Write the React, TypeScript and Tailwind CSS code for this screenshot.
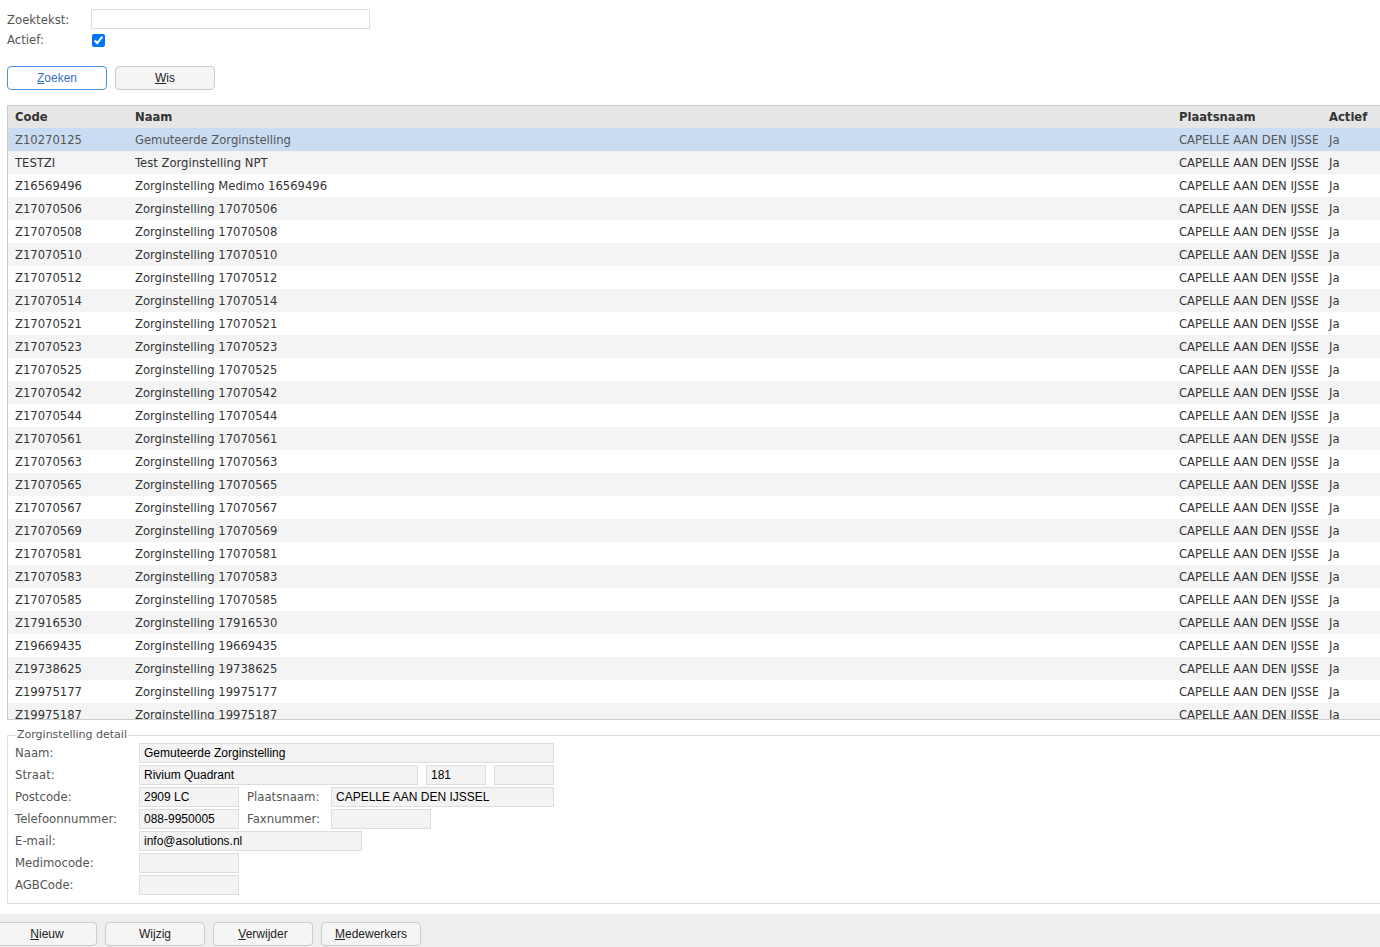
import React from "react";

const codes: [string, string][] = [
  ["Z10270125", "Gemuteerde Zorginstelling"],
  ["TESTZI", "Test Zorginstelling NPT"],
  ["Z16569496", "Zorginstelling Medimo 16569496"],
  ["Z17070506", "Zorginstelling 17070506"],
  ["Z17070508", "Zorginstelling 17070508"],
  ["Z17070510", "Zorginstelling 17070510"],
  ["Z17070512", "Zorginstelling 17070512"],
  ["Z17070514", "Zorginstelling 17070514"],
  ["Z17070521", "Zorginstelling 17070521"],
  ["Z17070523", "Zorginstelling 17070523"],
  ["Z17070525", "Zorginstelling 17070525"],
  ["Z17070542", "Zorginstelling 17070542"],
  ["Z17070544", "Zorginstelling 17070544"],
  ["Z17070561", "Zorginstelling 17070561"],
  ["Z17070563", "Zorginstelling 17070563"],
  ["Z17070565", "Zorginstelling 17070565"],
  ["Z17070567", "Zorginstelling 17070567"],
  ["Z17070569", "Zorginstelling 17070569"],
  ["Z17070581", "Zorginstelling 17070581"],
  ["Z17070583", "Zorginstelling 17070583"],
  ["Z17070585", "Zorginstelling 17070585"],
  ["Z17916530", "Zorginstelling 17916530"],
  ["Z19669435", "Zorginstelling 19669435"],
  ["Z19738625", "Zorginstelling 19738625"],
  ["Z19975177", "Zorginstelling 19975177"],
  ["Z19975187", "Zorginstelling 19975187"],
  ["Z19975199", "Zorginstelling 19975199"],
  ["Z20000001", "Zorginstelling 20000001"],
];

const dv = "font-['DejaVu_Sans',Verdana,sans-serif]";
const ar = "font-['Liberation_Sans',Arial,sans-serif]";

function Field({ w, value }: { w: string; value?: string }) {
  return (
    <div
      className={`${w} h-[20px] bg-[#f3f3f3] border border-[#dddddd] pl-[4px] flex items-center text-[12px] text-black ${ar} whitespace-nowrap overflow-hidden`}
    >
      {value}
    </div>
  );
}

function Label({ children, w = "w-[124px]" }: { children: React.ReactNode; w?: string }) {
  return <div className={`${w} pt-[1px] text-[11.7px] text-[#555] ${dv} whitespace-nowrap`}>{children}</div>;
}

function Btn({ u, rest, primary, extra = "" }: { u: string; rest: string; primary?: boolean; extra?: string }) {
  return (
    <button
      className={`w-[100px] h-[24px] rounded-[4px] text-[12px] ${ar} ${extra} ${
        primary
          ? "border border-[#4a90e2] bg-white text-[#3a6fc4]"
          : "border border-[#cccccc] bg-[#f5f5f5] text-[#222]"
      }`}
    >
      <span className="underline">{u}</span>
      {rest}
    </button>
  );
}

export default function App() {
  return (
    <div className={`w-[1380px] h-[947px] overflow-hidden bg-white flex flex-col ${dv}`}>
      <div className="pl-[7px] pt-[9px] flex flex-col">
        <div className="flex items-center h-[20px]">
          <div className="w-[84px] pt-[3px] text-[11.7px] text-[#555]">Zoektekst:</div>
          <div className="w-[279px] h-[20px] border border-[#dddddd] bg-white" />
        </div>
        <div className="flex items-center h-[22px]">
          <div className="w-[85px] pt-[2px] text-[11.7px] text-[#555]">Actief:</div>
          <input type="checkbox" defaultChecked className="w-[13px] h-[13px] m-0 accent-[#0075ff]" />
        </div>
        <div className="flex gap-[8px] mt-[15px]">
          <Btn u="Z" rest="oeken" primary />
          <Btn u="W" rest="is" />
        </div>
      </div>

      <div className="ml-[7px] mt-[15px] h-[615px] border-t border-l border-b border-[#cccccc] overflow-hidden">
        <div className="grid grid-cols-[120px_1fr_156px_52px] h-[22px] pt-[2px] bg-[#e6e6e6] items-center text-[11.6px] font-bold text-[#333]">
          <div className="pl-[7px]">Code</div>
          <div className="pl-[7px]">Naam</div>
          <div className="pl-[7px]">Plaatsnaam</div>
          <div className="pl-[1px]">Actief</div>
        </div>
        {codes.map(([c, n], i) => (
          <div
            key={c}
            className={`grid grid-cols-[120px_1fr_156px_52px] h-[23px] pt-[2px] items-center text-[11.6px] ${
              i === 0 ? "bg-[#c9dcf2] text-[#555]" : i % 2 === 1 ? "bg-[#f4f4f4] text-[#333]" : "bg-white text-[#333]"
            }`}
          >
            <div className="pl-[7px] whitespace-nowrap overflow-hidden">{c}</div>
            <div className="pl-[7px] whitespace-nowrap overflow-hidden">{n}</div>
            <div className="pl-[7px]">
              <div className="w-[139px] whitespace-nowrap overflow-hidden">CAPELLE AAN DEN IJSSEL</div>
            </div>
            <div className="pl-[1px]">Ja</div>
          </div>
        ))}
      </div>

      <fieldset className="ml-[7px] mt-[8px] border border-r-0 border-[#dddddd] pl-[7px] pb-[6px] h-[176px]">
        <legend className="ml-[1px] px-[1px] text-[11px] text-[#555] leading-[14px]">Zorginstelling detail</legend>
        <div className="flex flex-col gap-[2px] pt-[1px]">
          <div className="flex items-center">
            <Label>Naam:</Label>
            <Field w="w-[415px]" value="Gemuteerde Zorginstelling" />
          </div>
          <div className="flex items-center">
            <Label>Straat:</Label>
            <Field w="w-[279px]" value="Rivium Quadrant" />
            <div className="w-[8px]" />
            <Field w="w-[60px]" value="181" />
            <div className="w-[8px]" />
            <Field w="w-[60px]" />
          </div>
          <div className="flex items-center">
            <Label>Postcode:</Label>
            <Field w="w-[100px]" value="2909 LC" />
            <div className="w-[8px]" />
            <Label w="w-[84px]">Plaatsnaam:</Label>
            <Field w="w-[223px]" value="CAPELLE AAN DEN IJSSEL" />
          </div>
          <div className="flex items-center">
            <Label>Telefoonnummer:</Label>
            <Field w="w-[100px]" value="088-9950005" />
            <div className="w-[8px]" />
            <Label w="w-[84px]">Faxnummer:</Label>
            <Field w="w-[100px]" />
          </div>
          <div className="flex items-center">
            <Label>E-mail:</Label>
            <Field w="w-[223px]" value="info@asolutions.nl" />
          </div>
          <div className="flex items-center">
            <Label>Medimocode:</Label>
            <Field w="w-[100px]" />
          </div>
          <div className="flex items-center">
            <Label>AGBCode:</Label>
            <Field w="w-[100px]" />
          </div>
        </div>
      </fieldset>

      <div className="mt-[10px] flex-1 bg-[#eeeeee] pt-[8px] flex gap-[8px] items-start">
        <Btn u="N" rest="ieuw" extra="ml-[-3px]" />
        <button className={`w-[100px] h-[24px] rounded-[4px] text-[12px] ${ar} border border-[#cccccc] bg-[#f5f5f5] text-[#222]`}>
          Wijzig
        </button>
        <Btn u="V" rest="erwijder" />
        <Btn u="M" rest="edewerkers" />
      </div>
    </div>
  );
}
